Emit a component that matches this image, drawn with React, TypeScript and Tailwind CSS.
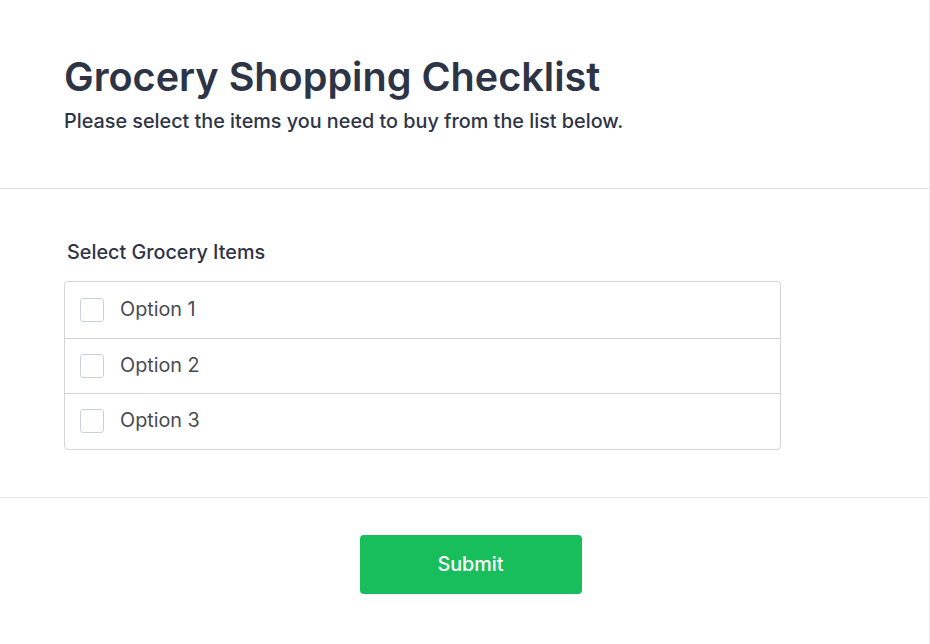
import { useState } from "react"

const options = ["Option 1", "Option 2", "Option 3"]

export default function App() {
  const [checked, setChecked] = useState<boolean[]>([false, false, false])

  const toggle = (i: number) =>
    setChecked((prev) => prev.map((v, idx) => (idx === i ? !v : v)))

  return (
    <div className="min-h-[644px] w-[930px] bg-white font-['Inter',sans-serif] border-r border-[#eef0f4]">
      {/* Header */}
      <div className="px-16 pt-[51px] pb-[52px] border-b border-[#dcdde6]">
        <h1 className="text-[39.6px] leading-[52px] font-semibold text-[#2d3446]">
          Grocery Shopping Checklist
        </h1>
        <p className="mt-[3px] text-[19.8px] leading-[30px] font-medium text-[#2d3446]">
          Please select the items you need to buy from the list below.
        </p>
      </div>

      {/* Checklist */}
      <div className="px-16 pt-[50px] pb-[47px] border-b border-[#e8e9ef]">
        <label className="block pl-[3px] text-[19.8px] leading-[26px] font-medium text-[#2d3446]">
          Select Grocery Items
        </label>
        <div className="mt-[16px] w-[717px] rounded-[4px] border border-[#d4d4d8]">
          {options.map((opt, i) => (
            <div
              key={opt}
              onClick={() => toggle(i)}
              className={
                "flex h-[55.5px] cursor-pointer items-center gap-4 px-[15px]" +
                (i > 0 ? " border-t border-[#d4d4d8]" : "")
              }
            >
              <span
                className={
                  "h-6 w-6 rounded-[3px] border " +
                  (checked[i] ? "border-[#19be5c] bg-[#19be5c]" : "border-[#cbd2de] bg-white")
                }
              />
              <span className="text-[19.8px] text-[#4a4a52]">{opt}</span>
            </div>
          ))}
        </div>
      </div>

      {/* Footer */}
      <div className="flex justify-center pl-3 pt-[37px] pb-[49px]">
        <button className="h-[59px] w-[222px] rounded-[4px] bg-[#19be5c] pt-[2px] text-[19.8px] font-medium text-white">
          Submit
        </button>
      </div>
    </div>
  )
}
